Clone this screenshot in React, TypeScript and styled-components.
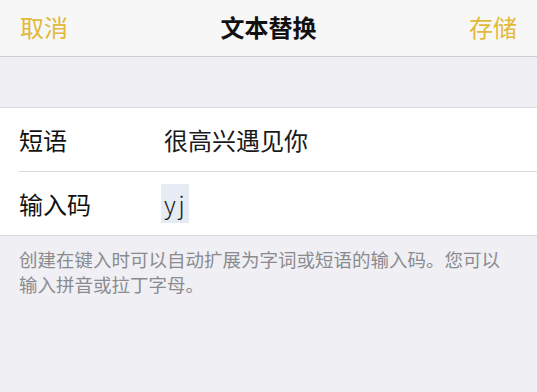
import styled, { createGlobalStyle } from "styled-components";

const GlobalStyle = createGlobalStyle`
  html, body {
    margin: 0;
    padding: 0;
    background: #efeff4;
    font-family: "Noto Sans CJK SC", "Noto Sans", sans-serif;
  }
`;

const Page = styled.div`
  width: 537px;
  height: 392px;
  display: flex;
  flex-direction: column;
  background: #efeff4;
  overflow: hidden;
`;

const NavBar = styled.div`
  height: 57px;
  display: grid;
  grid-template-columns: 1fr auto 1fr;
  align-items: center;
  padding: 0 20px 4px 20px;
  box-sizing: border-box;
  background: #f7f7f7;
  border-bottom: 1px solid #cfcfd2;
`;

const NavButton = styled.div<{ $right?: boolean }>`
  font-size: 24px;
  color: #e2b93b;
  justify-self: ${(p) => (p.$right ? "end" : "start")};
`;

const Title = styled.div`
  font-size: 24px;
  font-weight: 700;
  color: #111;
`;

const Spacer = styled.div`
  height: 50px;
  border-bottom: 1px solid #dadadd;
`;

const Group = styled.div`
  background: #fff;
  border-bottom: 1px solid #dadadd;
  padding-left: 18px;
`;

const Row = styled.div<{ $last?: boolean }>`
  height: 63px;
  display: flex;
  align-items: center;
  border-bottom: ${(p) => (p.$last ? "none" : "1px solid #dcdcdf")};
  font-size: 24px;
  color: #111;
`;

const Label = styled.div`
  width: 145px;
  padding-left: 1px;
`;

const Value = styled.div`
  color: #1a1a1a;
`;

const Selected = styled.span`
  background: #e6ecf3;
  padding: 2px 1px 2px 3px;
  margin-left: -3px;
  letter-spacing: 3px;
  font-weight: 300;
`;

const Footer = styled.div`
  padding: 11px 30px 0 19px;
  font-size: 18.5px;
  line-height: 25px;
  color: #8b8b8f;
`;

export default function App() {
  return (
    <Page>
      <GlobalStyle />
      <NavBar>
        <NavButton>取消</NavButton>
        <Title>文本替换</Title>
        <NavButton $right>存储</NavButton>
      </NavBar>
      <Spacer />
      <Group>
        <Row>
          <Label>短语</Label>
          <Value>很高兴遇见你</Value>
        </Row>
        <Row $last>
          <Label>输入码</Label>
          <Value>
            <Selected>yj</Selected>
          </Value>
        </Row>
      </Group>
      <Footer>创建在键入时可以自动扩展为字词或短语的输入码。您可以输入拼音或拉丁字母。</Footer>
    </Page>
  );
}
